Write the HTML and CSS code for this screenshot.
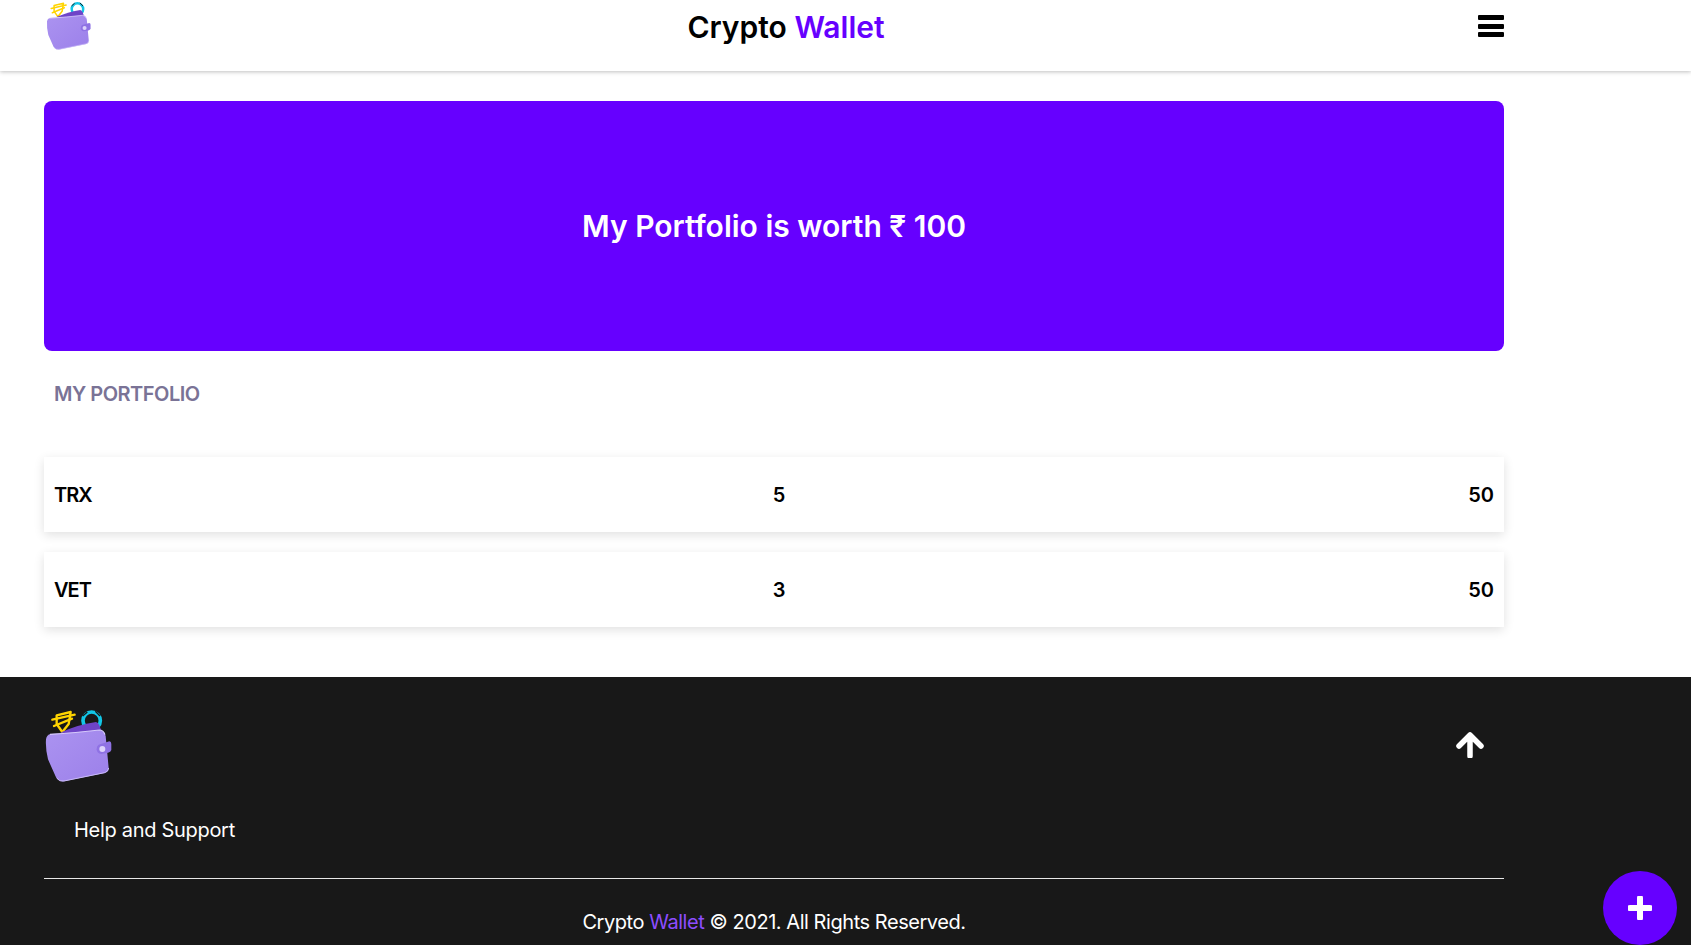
FILE: index.html
```html
<!DOCTYPE html>
<html lang="en">
<head>
  <meta charset="UTF-8">
  <meta name="viewport" content="width=device-width, initial-scale=1.0">
  <title>Crypto Wallet</title>
  <link rel="stylesheet" href="styles.css">
</head>
<body>

<svg class="defs" width="0" height="0">
  <defs>
    <linearGradient id="walletFill" x1="0" y1="0" x2="1" y2="1">
      <stop offset="0" stop-color="#ab93f0"/>
      <stop offset="1" stop-color="#9c80ea"/>
    </linearGradient>
    <symbol id="wallet" viewBox="12 15 210 225">
      <!-- ring azul -->
      <circle cx="155" cy="56" r="26" fill="none" stroke="#12c6e6" stroke-width="11"/>
      <path d="M128 42 L142 30 M166 28 L180 42" stroke="#181818" stroke-width="4"/>
      <!-- coin amarilla -->
      <g fill="none" stroke="#ffd400" stroke-width="7" stroke-linejoin="round" stroke-linecap="round">
        <path d="M50 40 L92 30 L86 66 L67 90 L50 66 Z"/>
        <path d="M37 53 L104 38 M42 72 L96 50"/>
      </g>
      <!-- cartera -->
      <path d="M60 92 Q120 66 168 60 Q180 62 186 98 Z" fill="#6f44c8"/>
      <path d="M32 96 Q110 92 178 84 Q192 84 197 102 L206 198 Q206 210 194 213 L72 238 Q56 240 48 226 L24 172 Q16 140 18 112 Q20 98 32 96 Z" fill="url(#walletFill)"/>
      <path d="M30 97 Q110 92 178 84 Q190 84 195 98" fill="none" stroke="#d4c8fa" stroke-width="3.5"/>
      <path d="M50 228 Q58 240 72 237 L194 212 Q205 209 206 198" fill="none" stroke="#c9baf8" stroke-width="3"/>
      <path d="M176 128 L208 118 Q214 118 214 126 L214 144 Q212 150 204 152 L184 156 Q170 154 170 142 Q170 132 176 128 Z" fill="#8f72e4"/>
      <circle cx="187" cy="141" r="9" fill="#dcd2fb"/>
    </symbol>
  </defs>
</svg>

<header class="topbar">
  <svg class="logo-small"><use href="#wallet"/></svg>
  <h1 class="brand">Crypto <span class="accent">Wallet</span></h1>
  <div class="burger"><span></span><span></span><span></span></div>
</header>

<main class="content">
  <section class="banner">
    <h2>My Portfolio is worth ₹ 100</h2>
  </section>

  <h3 class="section-title">MY PORTFOLIO</h3>

  <div class="coin-row">
    <span class="coin-name">TRX</span>
    <span>5</span>
    <span>50</span>
  </div>
  <div class="coin-row">
    <span class="coin-name">VET</span>
    <span>3</span>
    <span>50</span>
  </div>
</main>

<footer class="footer">
  <div class="footer-inner">
    <div class="footer-top">
      <svg class="logo-big"><use href="#wallet"/></svg>
      <svg class="up-arrow" viewBox="0 0 28 26">
        <path d="M14 3 L25 14 M14 3 L3 14 M14 4 V24" fill="none" stroke="#fff" stroke-width="5.5" stroke-linecap="round" stroke-linejoin="round"/>
      </svg>
    </div>
    <a class="help" href="#">Help and Support</a>
    <div class="copy">Crypto <span class="accent-light">Wallet</span> © 2021. All Rights Reserved.</div>
  </div>
</footer>

<button class="fab" type="button">
  <svg viewBox="0 0 24 24" width="24" height="24">
    <path d="M12 2 V22 M2 12 H22" stroke="#fff" stroke-width="6" stroke-linecap="round"/>
  </svg>
</button>

</body>
</html>
```

FILE: styles.css
```css
html, body {
  height: 945px;
  overflow: hidden;
}

body {
  font-family: "Inter", "Liberation Sans", sans-serif;
  margin: 0;
  padding: 0;
  background-color: #fff;
  color: #000;
}

.defs {
  position: absolute;
}

/* Barra superior */
.topbar {
  height: 71px;
  width: 1460px;
  padding: 0 187px 0 44px;
  display: flex;
  justify-content: space-between;
  align-items: flex-start;
  box-shadow: 0 1px 4px rgba(0, 0, 0, 0.25);
  position: relative;
}

.logo-small {
  width: 50px;
  height: 50px;
}

.brand {
  margin: 9px 0 0 0;
  font-size: 30px;
  line-height: 36px;
  font-weight: 600;
  letter-spacing: 0;
}

.accent {
  color: #6600ff;
}

.burger {
  display: flex;
  flex-direction: column;
  gap: 3.5px;
  width: 26px;
  margin-top: 15px;
}

.burger span {
  height: 5px;
  background-color: #000;
  border-radius: 1px;
}

/* Contenido */
.content {
  width: 1460px;
  margin-left: 44px;
  padding-top: 30px;
  height: 576px;
}

.banner {
  height: 250px;
  background-color: #6600ff;
  border-radius: 8px;
  display: flex;
  align-items: center;
  justify-content: center;
}

.banner h2 {
  margin: 0;
  color: #fff;
  font-size: 30px;
  font-weight: 600;
  letter-spacing: 0;
}

.section-title {
  margin: 30px 0 50px;
  padding-left: 10px;
  height: 26px;
  line-height: 26px;
  font-family: "Inter", sans-serif;
  font-size: 20px;
  font-weight: 600;
  color: #7a7396;
  letter-spacing: -0.5px;
}

.coin-row {
  height: 75px;
  margin-bottom: 20px;
  padding: 0 10px;
  display: grid;
  grid-template-columns: 1fr 1fr 1fr;
  align-items: center;
  font-size: 20px;
  font-weight: 600;
  background-color: #fff;
  box-shadow: 0 3px 10px rgba(0, 0, 0, 0.12);
}

.coin-name {
  letter-spacing: -1px;
}

.coin-row span:nth-child(2) {
  text-align: center;
  padding-left: 10px;
}

.coin-row span:nth-child(3) {
  text-align: right;
}

/* Pie */
.footer {
  background-color: #181818;
  height: 268px;
  overflow: hidden;
}

.footer-inner {
  width: 1460px;
  margin-left: 44px;
  padding-top: 30px;
  color: #fff;
}

.footer-top {
  display: flex;
  justify-content: space-between;
  align-items: center;
  height: 75px;
}

.logo-big {
  width: 70px;
  height: 75px;
}

.up-arrow {
  width: 28px;
  height: 26px;
  margin-right: 20px;
}

.help {
  display: block;
  margin-top: 33px;
  padding: 0 0 33px 30px;
  height: 30px;
  line-height: 30px;
  color: #fff;
  font-size: 20px;
  font-weight: 400;
  text-decoration: none;
  letter-spacing: -0.3px;
  border-bottom: 1px solid #e8e8e8;
}

.copy {
  margin-top: 31px;
  text-align: center;
  font-size: 20px;
  letter-spacing: -0.45px;
}

.accent-light {
  color: #8d4dff;
}

/* Boton flotante */
.fab {
  position: fixed;
  right: 14px;
  bottom: 0;
  width: 74px;
  height: 74px;
  padding: 0;
  border: none;
  border-radius: 50%;
  background-color: #6600ff;
  display: flex;
  align-items: center;
  justify-content: center;
}
```
